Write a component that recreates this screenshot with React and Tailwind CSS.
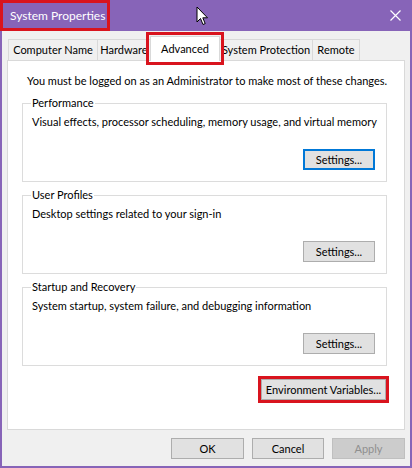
import React from 'react';

const font = { fontFamily: 'Lato, "Liberation Sans", Arial, sans-serif' };

const Btn = ({ children, w = 'w-[72px]', focused, disabled, className = '' }) => (
  <div
    className={`${w} h-[21px] flex items-center justify-center text-[11px] leading-none whitespace-nowrap ${
      focused
        ? 'border-2 border-[#0078d7] bg-[#e1e1e1] text-black'
        : disabled
        ? 'border border-[#bfbfbf] bg-[#cccccc] text-[#8f8f8f]'
        : 'border border-[#adadad] bg-[#e1e1e1] text-black'
    } ${className}`}
  >
    {children}
  </div>
);

const Group = ({ title, text, focused }) => (
  <div className="h-[79px] border border-[#dcdcdc] px-[9px] pb-[11px] flex flex-col">
    <div className="-mt-[9px] -ml-[1px] self-start bg-white px-[1px] text-[11px] leading-[16px] whitespace-nowrap">{title}</div>
    <div className="text-[11px] leading-[16px] mt-[3px] whitespace-nowrap">{text}</div>
    <div className="mt-auto flex justify-end pr-[2px]">
      <Btn focused={focused}>Settings...</Btn>
    </div>
  </div>
);

const Tab = ({ label, w }) => (
  <div className={`${w} h-[21px] border border-b-0 border-[#d9d9d9] bg-[#f0f0f0] flex items-center justify-center text-[11px] whitespace-nowrap -ml-px first:ml-0`}>
    {label}
  </div>
);

export default function App() {
  return (
    <div className="w-[412px] h-[468px] bg-[#8764b8] flex flex-col relative text-black" style={font}>
      {/* title bar */}
      <div className="h-[31px] flex items-center justify-between text-white">
        <div className="h-[31px] w-[110px] border-[3px] border-[#d9141e] flex items-center pl-[7px] text-[12px] whitespace-nowrap">
          System Properties
        </div>
        <svg width="11" height="11" viewBox="0 0 11 11" className="mr-[11px]">
          <path d="M0.5 0.5 L10.5 10.5 M10.5 0.5 L0.5 10.5" stroke="#ffffff" strokeWidth="1.2" />
        </svg>
      </div>

      {/* cursor */}
      <svg width="14" height="20" viewBox="0 0 14 20" className="absolute left-[196px] top-[6px]">
        <path d="M1 1 L1 16 L4.5 12.5 L7 18.5 L9.2 17.6 L6.8 11.8 L11.5 11.8 Z" fill="#ffffff" stroke="#000000" strokeWidth="1" strokeLinejoin="round" />
      </svg>

      {/* body */}
      <div className="flex-1 bg-[#f0f0f0] mx-[2px] mb-[2px] px-[5px] pt-[9px] flex flex-col">
        <div className="flex items-end h-[20px] pl-px">
          <Tab label="Computer Name" w="w-[90px]" />
          <Tab label="Hardware" w="w-[54px]" />
          <div className="w-[70px] h-[25px] -ml-px mb-[-1px] relative z-10 bg-white border border-b-0 border-[#d9d9d9] flex items-center justify-center text-[11px] outline-solid outline-[3px] outline-[#d9141e] outline-offset-[1px]">
            Advanced
          </div>
          <Tab label="System Protection" w="w-[94px]" />
          <Tab label="Remote" w="w-[48px]" />
        </div>

        <div className="h-[370px] bg-white border border-[#d9d9d9] pl-[14px] pr-[17px] flex flex-col">
          <div className="text-[11px] leading-[16px] mt-[12px] pl-[5px] whitespace-nowrap">
            You must be logged on as an Administrator to make most of these changes.
          </div>
          <div className="mt-[14px] flex flex-col gap-[13px]">
            <Group title="Performance" text="Visual effects, processor scheduling, memory usage, and virtual memory" focused />
            <Group title="User Profiles" text="Desktop settings related to your sign-in" />
            <Group title="Startup and Recovery" text="System startup, system failure, and debugging information" />
          </div>
          <div className="mt-[13px] flex justify-end pr-[1px]">
            <Btn w="w-[125px]" className="outline-solid outline-[3px] outline-[#d9141e] outline-offset-[0px]">
              Environment Variables...
            </Btn>
          </div>
        </div>

        <div className="flex justify-end gap-[8px] mt-[8px]">
          <Btn w="w-[73px]">OK</Btn>
          <Btn w="w-[72px]">Cancel</Btn>
          <Btn w="w-[73px]" disabled>Apply</Btn>
        </div>
      </div>
    </div>
  );
}
